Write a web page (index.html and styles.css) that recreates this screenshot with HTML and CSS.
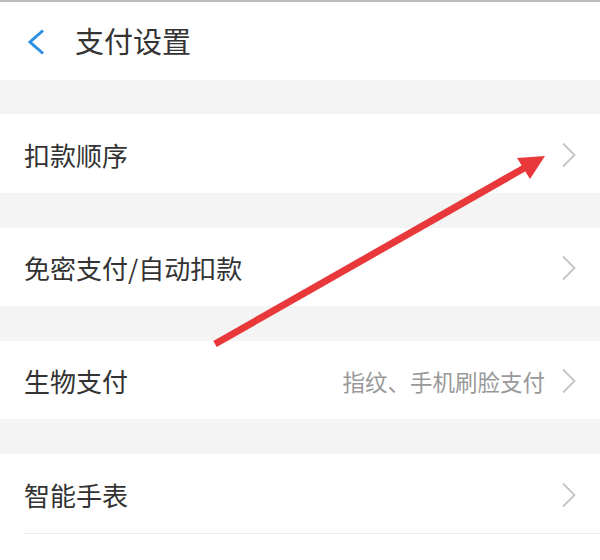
FILE: index.html
```html
<!DOCTYPE html>
<html lang="zh">
<head>
<meta charset="utf-8">
<link rel="stylesheet" href="styles.css">
</head>
<body>
<div class="page">
  <header class="header">
    <svg class="back" width="20" height="28" viewBox="0 0 20 28"><path d="M17 2.5 L4 14 L17 25.5" fill="none" stroke="#2b8fe3" stroke-width="3"/></svg>
    <span class="title">支付设置</span>
  </header>
  <div class="gap"></div>
  <div class="row r1"><span class="label">扣款顺序</span><span class="right"><svg class="chev" width="16" height="26" viewBox="0 0 16 26"><path d="M2 1.5 L13.5 13 L2 24.5" fill="none" stroke="#c4c4c4" stroke-width="1.8"/></svg></span></div>
  <div class="gap g2"></div>
  <div class="row"><span class="label">免密支付/自动扣款</span><span class="right"><svg class="chev" width="16" height="26" viewBox="0 0 16 26"><path d="M2 1.5 L13.5 13 L2 24.5" fill="none" stroke="#c4c4c4" stroke-width="1.8"/></svg></span></div>
  <div class="gap g2"></div>
  <div class="row"><span class="label">生物支付</span><span class="right"><span class="value">指纹、手机刷脸支付</span><svg class="chev" width="16" height="26" viewBox="0 0 16 26"><path d="M2 1.5 L13.5 13 L2 24.5" fill="none" stroke="#c4c4c4" stroke-width="1.8"/></svg></span></div>
  <div class="gap g2"></div>
  <div class="row r4"><span class="label">智能手表</span><span class="right"><svg class="chev" width="16" height="26" viewBox="0 0 16 26"><path d="M2 1.5 L13.5 13 L2 24.5" fill="none" stroke="#c4c4c4" stroke-width="1.8"/></svg></span></div>
  <div class="divider"></div>
  <svg class="arrow" width="600" height="560" viewBox="0 0 600 560">
    <line x1="215" y1="344" x2="526" y2="167" stroke="#e8383a" stroke-width="7"/>
    <polygon points="517,158 545,156 530,179" fill="#e8383a"/>
  </svg>
</div>
</body>
</html>
```

FILE: styles.css
```css
html, body {
  margin: 0;
  padding: 0;
  background: #ffffff;
}
.page {
  position: relative;
  width: 600px;
  height: 560px;
  overflow: hidden;
  font-family: "Noto Sans CJK SC", "Noto Sans", sans-serif;
  color: #333333;
}
.header {
  height: 78px;
  border-top: 2px solid #bcbcbc;
  display: flex;
  align-items: center;
  padding-left: 26px;
  box-sizing: content-box;
}
.back {
  display: block;
  margin-top: 1px;
}
.title {
  font-size: 29px;
  margin-left: 29px;
  line-height: 1;
  margin-top: -2px;
}
.gap {
  height: 34px;
  background: #f4f4f4;
}
.g2 {
  height: 35px;
}
.row {
  height: 78px;
  display: flex;
  align-items: center;
  justify-content: space-between;
  padding: 0 23px 0 24px;
  background: #ffffff;
}
.r1, .r4 {
  height: 79px;
}
.label {
  font-size: 26px;
  line-height: 1;
  margin-top: 2px;
}
.right {
  display: flex;
  align-items: center;
}
.value {
  font-size: 22.5px;
  color: #999999;
  line-height: 1;
  margin-right: 16px;
  margin-top: 2px;
}
.chev {
  display: block;
  margin-top: 2px;
}
.divider {
  height: 1px;
  margin-left: 24px;
  background: #ececec;
}
.arrow {
  position: absolute;
  left: 0;
  top: 0;
  pointer-events: none;
}
```
